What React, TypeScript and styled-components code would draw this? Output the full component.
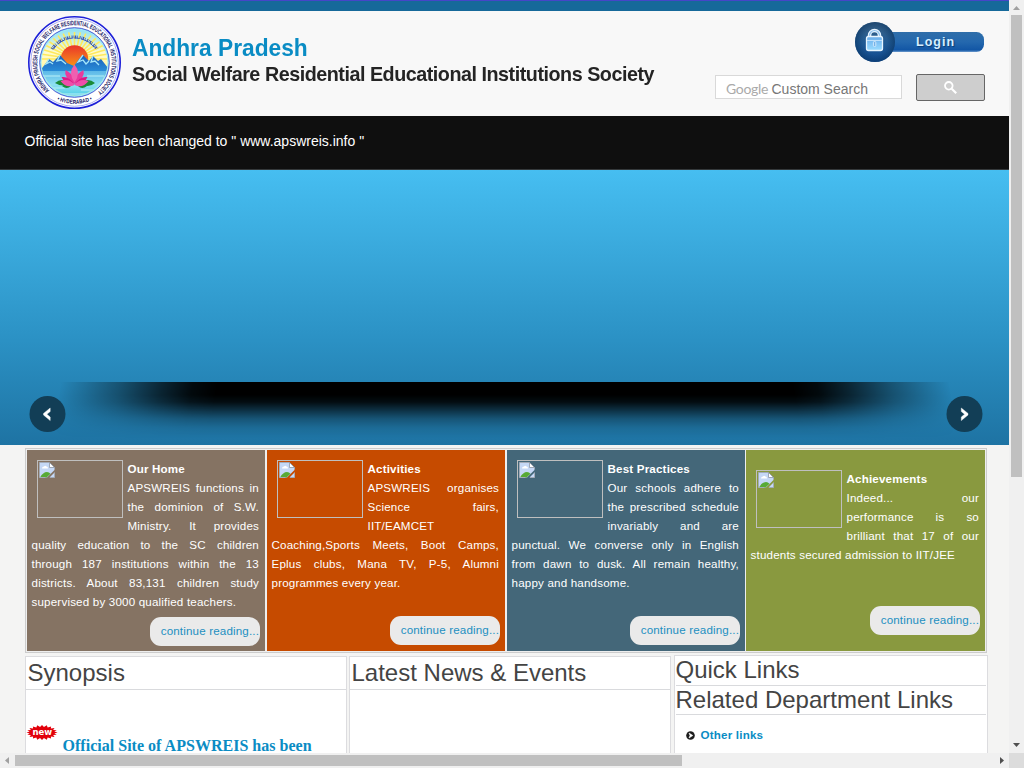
import React from "react";
import styled, { createGlobalStyle } from "styled-components";

const Global = createGlobalStyle`
  * { box-sizing: border-box; }
  body { margin: 0; overflow: hidden; background: #f4f4f3; font-family: "Liberation Sans", Arial, sans-serif; }
  h1, h2, h3, p { margin: 0; }
`;

const Window = styled.div`
  display: grid;
  grid-template-columns: 1009px 15px;
  grid-template-rows: 753px 15px;
  width: 1024px;
  height: 768px;
  overflow: hidden;
`;

const Viewport = styled.div`
  overflow: hidden;
  background: #f4f4f3;
`;

const Header = styled.header`
  height: 116px;
  border-top: 1px solid #4646c8;
  background: linear-gradient(#16699a 10px, #f8f8f8 10px);
  display: flex;
  justify-content: space-between;
  padding: 14px 24px 0 27px;
`;

const Brand = styled.div`
  display: flex;
  gap: 10px;
`;

const Titles = styled.div`
  width: 540px;
  padding-top: 19px;
`;

const StateName = styled.h1`
  width: max-content;
  font-size: 24px;
  line-height: 27px;
  transform: scaleX(0.948);
  transform-origin: 0 0;
  color: #0a8cc4;
`;

const Society = styled.h2`
  width: max-content;
  font-size: 21px;
  line-height: 26px;
  letter-spacing: -0.5px;
  transform: scaleX(0.939);
  transform-origin: 0 0;
  color: #242424;
  white-space: nowrap;
`;

const Tools = styled.div`
  width: 270px;
  padding-top: 7px;
`;

const LoginRow = styled.div`
  display: flex;
  justify-content: flex-end;
  height: 52px;
`;

const SearchRow = styled.div`
  display: flex;
  justify-content: space-between;
`;

const SearchBox = styled.div`
  width: 187px;
  height: 24px;
  margin-top: 1px;
  border: 1px solid #d9d9d9;
  background: #fff;
  display: flex;
  align-items: center;
  padding: 3px 0 0 10px;
  font-size: 14px;
  color: #777;
  white-space: nowrap;
`;

const Google = styled.span`
  width: 45.5px;
  font-family: Lato, sans-serif;
  font-size: 14px;
  letter-spacing: -0.3px;
  color: #aaa;
`;

const SearchButton = styled.button`
  width: 69px;
  height: 27px;
  padding: 0;
  border: 1px solid #666;
  border-radius: 2px;
  background: #cecece;
  display: flex;
  align-items: center;
  justify-content: center;
`;

const Notice = styled.div`
  height: 54px;
  background: #0f0f0f;
  border-bottom: 1px solid #35393b;
  color: #fff;
  font-size: 14px;
  line-height: 50px;
  padding-left: 24.5px;
`;

const Hero = styled.section`
  height: 275px;
  padding: 212px 26px 0 29px;
  background: linear-gradient(#46bef1 0%, #2b91c4 62%, #1e73a3 100%);
`;

const SliderFoot = styled.div`
  height: 63px;
  display: grid;
  grid-template-columns: 37px 1fr 37px;
  svg { grid-row: 1; grid-column: 1; margin-top: 14px; z-index: 1; }
  svg:last-child { grid-column: 3; }
  &::before {
    content: "";
    grid-area: 1 / 1 / 2 / 4;
    margin: 0 20px 0 18px;
    background: linear-gradient(#000 13px, rgba(0,0,0,.9) 20px, rgba(0,0,0,.62) 28px, rgba(0,0,0,.3) 37px, rgba(0,0,0,.1) 46px, transparent 56px);
    mask-image:
      linear-gradient(100deg, transparent 14px, rgba(0,0,0,.15) 38px, rgba(0,0,0,.38) 72px, rgba(0,0,0,.72) 114px, rgba(0,0,0,.93) 144px, #000 168px),
      linear-gradient(260deg, transparent 14px, rgba(0,0,0,.15) 38px, rgba(0,0,0,.38) 72px, rgba(0,0,0,.72) 114px, rgba(0,0,0,.93) 144px, #000 168px);
    mask-composite: intersect;
  }
`;

const Content = styled.main`
  margin-left: 25px;
  width: 963px;
  padding-top: 3px;
`;

const Cards = styled.section`
  width: 962px;
  height: 205px;
  border: 1px solid #ccc;
  background: #eee;
  padding: 1px;
  display: grid;
  grid-template-columns: 240px 240px 239px 239px;
`;

const Card = styled.article<{ $color: string; $gap: number; $top: number; $bottom: number }>`
  background: ${(p) => p.$color};
  margin-right: ${(p) => p.$gap}px;
  padding: ${(p) => p.$top}px 5px ${(p) => p.$bottom}px 4.5px;
  height: 201px;
  display: flex;
  flex-direction: column;
`;

const CardText = styled.div`
  flex: 1;
  margin-right: 1px;
  color: #fff;
  font-size: 11.6px;
  letter-spacing: 0.18px;
  line-height: 19px;
  text-align: justify;
`;

const Picture = styled.div`
  float: left;
  width: 86px;
  height: 58px;
  border: 1px solid #bfbfbf;
  margin: 1px 4.5px 12px 5.5px;
`;

const More = styled.a`
  align-self: flex-end;
  width: 110px;
  height: 29px;
  border-radius: 11px;
  background: #eaeaea;
  color: #1c8fc1;
  font-size: 11.6px;
  letter-spacing: 0.16px;
  line-height: 28px;
  padding-left: 10.7px;
  white-space: nowrap;
`;

const Panels = styled.section`
  display: grid;
  grid-template-columns: 324px 325px 314px;
  align-items: start;
  padding-top: 2px;
`;

const Panel = styled.div<{ $quick?: boolean }>`
  width: ${(p) => (p.$quick ? 314 : 322)}px;
  height: 140px;
  margin-top: ${(p) => (p.$quick ? 0 : 1)}px;
  padding: 0 ${(p) => (p.$quick ? 1 : 0)}px;
  border: 1px solid #dcdcdf;
  background: #fff;
`;

const Heading = styled.h3<{ $height: number; $indent: number }>`
  height: ${(p) => p.$height}px;
  text-indent: ${(p) => p.$indent}px;
  border-bottom: 1px solid #d9dadd;
  font-weight: 400;
  font-size: 24px;
  line-height: ${(p) => p.$height - 2}px;
  color: #444;
`;

const NewsItem = styled.div`
  display: flex;
  align-items: flex-start;
  gap: 4.5px;
  padding: 35px 0 0 1px;
`;

const NewsLink = styled.a`
  margin-top: 12px;
  font: bold 16px/18px "Liberation Serif", "Times New Roman", serif;
  letter-spacing: 0.02px;
  color: #0a8cc4;
  white-space: nowrap;
`;

const LinkRow = styled.a`
  display: flex;
  align-items: center;
  gap: 5.5px;
  padding: 13px 0 0 10px;
  font-size: 11.6px;
  letter-spacing: 0.2px;
  font-weight: 700;
  line-height: 14px;
  color: #0a8cc4;
`;

const VerticalBar = styled.div`
  background: #f0f0f0;
  display: flex;
  flex-direction: column;
  align-items: center;
  svg:last-child { margin-top: auto; }
`;

const HorizontalBar = styled.div`
  background: #f0f0f0;
  display: flex;
  align-items: center;
  svg:last-child { margin-left: auto; }
`;

const Thumb = styled.div<{ $w: number; $h: number }>`
  width: ${(p) => p.$w}px;
  height: ${(p) => p.$h}px;
  background: #c0c0c0;
`;

const Corner = styled.div`
  background: #dcdcdc;
`;

const Triangle = ({ d, fill }: { d: string; fill: string }) => (
  <svg width="15" height="15" viewBox="0 0 15 15"><path d={d} fill={fill} /></svg>
);

const Emblem = () => (
  <svg width="95" height="95" viewBox="0 0 95 95">
    <defs>
      <linearGradient id="sky" x1="0" y1="0" x2="0" y2="1">
        <stop offset="0" stopColor="#8be0f6" /><stop offset=".35" stopColor="#fffbd0" /><stop offset=".6" stopColor="#fff6a0" />
      </linearGradient>
      <linearGradient id="lake" x1="0" y1="0" x2="0" y2="1">
        <stop offset="0" stopColor="#5cb8e8" /><stop offset=".5" stopColor="#8ee0f2" /><stop offset="1" stopColor="#42cbe4" />
      </linearGradient>
      <linearGradient id="sun" x1="0" y1="0" x2="0" y2="1">
        <stop offset="0" stopColor="#e8362a" /><stop offset="1" stopColor="#ffae13" />
      </linearGradient>
      <linearGradient id="hill" x1="0" y1="0" x2="0" y2="1">
        <stop offset="0" stopColor="#1c5fb8" /><stop offset="1" stopColor="#2b97df" />
      </linearGradient>
      <clipPath id="inner"><circle cx="47.5" cy="47.5" r="33" /></clipPath>
      <path id="ringTop" d="M26 78 A37.3 37.3 0 1 1 69 78" />
      <path id="ringBottom" d="M24 81.6 A41.5 41.5 0 0 0 71 81.6" />
    </defs>
    <circle cx="47.5" cy="47.5" r="45.7" fill="#fff" stroke="#1d20d8" strokeWidth="1.6" />
    <circle cx="47.5" cy="47.5" r="43.8" fill="none" stroke="#8a8ce8" strokeWidth=".7" />
    <circle cx="47.5" cy="47.5" r="34.8" fill="#9ce8f7" stroke="#2433c8" strokeWidth=".8" />
    <g clipPath="url(#inner)">
      <rect x="13" y="13" width="70" height="70" fill="url(#sky)" />
      <g stroke="#ffe95c" strokeWidth="1.6">
        {Array.from({ length: 19 }, (_, i) => {
          const a = (Math.PI * i) / 18;
          return <line key={i} x1="47.5" y1="44" x2={47.5 + 33 * Math.cos(a)} y2={44 - 27 * Math.sin(a)} />;
        })}
      </g>
      <circle cx="47.5" cy="44" r="13.7" fill="url(#sun)" />
      <path d="M12 57 L22 44 26 47 33 40 40 48 47 51 52 44 56 40 62 46 66 41 71 46 74 44 84 57V60H12z" fill="url(#hill)" />
      <path d="M22 44 19 49 23 47 26 49M33 40 30 46 34 45 39 49M56 40 51 47 56 45 59 49 62 46M66 41 64 47 68 46 72 50" fill="none" stroke="#a3e6fa" strokeWidth="1.3" />
      <rect x="12" y="56" width="72" height="27" fill="url(#lake)" />
      <path d="M15 61h18M60 61h17M18 73h20M54 75h17M32 79h27" stroke="#b9f0f7" strokeWidth="1" />
    </g>
    <g fill="none" stroke="#3a58b8">
      <path d="M25 34 A27 27 0 0 1 70 34" strokeWidth="3" strokeDasharray="1 .9 .7 .6 1.4 1 .6 1.7" />
      <path d="M26.5 34 A25.5 25.5 0 0 1 68.5 34" strokeWidth="1" strokeDasharray="5 1.5 8 2 6 2" />
    </g>
    <path d="M28 68q7-6 14 0-5 5-14 0M53 68q8-6 15 0-7 6-15 0M35 71q7-3 9 0-4 4-9 0M51 71q5-3 9 0-5 4-9 0" fill="#1a8a36" />
    <path d="M47.5 69q-11-6-9-14 6 3 9 9 3-6 9-9 2 8-9 14z" fill="#e83a9c" />
    <path d="M47.5 49.5q7 8 0 18-7-10 0-18z" fill="#f05fb0" />
    <path d="M47.5 70q-9 1-13-8 8-1 13 8 5-9 13-8-4 9-13 8z" fill="#dc1985" />
    <path d="M47.5 70q-8 4-14-4 9-3 14 4 5-7 14-4-6 8-14 4z" fill="#ef4eaa" />
    <g fill="#15155f" fontFamily="Liberation Sans, Arial, sans-serif" fontWeight="700">
      <text fontSize="6.6">
        <textPath href="#ringTop" startOffset="4.5" textLength="182" lengthAdjust="spacingAndGlyphs">ANDHRA PRADESH SOCIAL WELFARE RESIDENTIAL EDUCATIONAL INSTITUTIONS SOCIETY</textPath>
      </text>
      <text fontSize="5.8">
        <textPath href="#ringBottom" startOffset="7" textLength="36" lengthAdjust="spacingAndGlyphs">• HYDERABAD •</textPath>
      </text>
    </g>
  </svg>
);

const LoginBadge = () => (
  <svg width="130" height="41" viewBox="0 0 130 41">
    <defs>
      <linearGradient id="pill" x1="0" y1="0" x2="0" y2="1">
        <stop offset="0" stopColor="#2f6ea9" /><stop offset=".5" stopColor="#2468ae" /><stop offset=".9" stopColor="#1256a5" /><stop offset="1" stopColor="#6e9cce" />
      </linearGradient>
      <linearGradient id="disc" x1="0" y1="0" x2="0" y2="1">
        <stop offset="0" stopColor="#3d6384" /><stop offset=".5" stopColor="#215a92" /><stop offset="1" stopColor="#114c94" />
      </linearGradient>
      <radialGradient id="edge">
        <stop offset=".6" stopColor="#0a3766" stopOpacity="0" /><stop offset="1" stopColor="#0a3766" stopOpacity=".65" />
      </radialGradient>
      <linearGradient id="lock" x1="0" y1="0" x2="0" y2="1">
        <stop offset="0" stopColor="#69acea" /><stop offset="1" stopColor="#9bdcff" />
      </linearGradient>
    </defs>
    <rect x="24" y="10" width="105" height="20" rx="7.5" fill="url(#pill)" />
    <circle cx="20" cy="20" r="20" fill="url(#disc)" />
    <circle cx="20" cy="20" r="20" fill="url(#edge)" />
    <path d="M14.5 15v-1.500a5 5 0 0 1 10 0V15" fill="none" stroke="#e7f4ff" strokeWidth="3.6" />
    <path d="M14.5 15v-1.500a5 5 0 0 1 10 0V15" fill="none" stroke="#8dc0ee" strokeWidth="1.2" />
    <rect x="11.5" y="14.5" width="16" height="14" rx="2" fill="url(#lock)" stroke="#e9f6ff" strokeWidth="1.3" />
    <path d="M12 18.5h15" stroke="#bfe0fa" />
    <rect x="18.4" y="19.5" width="2.4" height="5" rx="1" fill="#76b2e8" stroke="#e7f5ff" strokeWidth=".8" />
    <text
      x="61" y="24" fontFamily="Liberation Sans, Arial, sans-serif" fontSize="12.5" fontWeight="700" letterSpacing="1"
      fill="#d6eeff" style={{ textShadow: "1px 1px 1px #0b3d75" }}
    >Login</text>
  </svg>
);

const Arrow = ({ next = false }: { next?: boolean }) => (
  <svg width="37" height="37" viewBox="0 0 37 37">
    <circle cx="18.5" cy="18" r="18" fill="#123e56" />
    <path
      d={next ? "M15.3 12 22 17.4V19L15.3 24.6V21L18.6 18.2 15.3 15.6z" : "M21.200 12 14.500 17.4V19L21.200 24.6V21L17.900 18.2 21.200 15.6z"}
      fill="#fff" stroke="#fff" strokeWidth=".4"
    />
  </svg>
);

const BrokenImage = () => (
  <svg width="18" height="18" viewBox="-1 -1 18 18" display="block">
    <path d="M.5.5h10l5 5V8L8 15.5H.5z" fill="#c5d8f6" />
    <path d="M3 6.5q0-2 2-2 1-1.500 2.500 0 1.500 0 1.500 2z" fill="#fff" />
    <path d="M1 15.5q3-5.500 7-5.500 2 0 3.500 1.700L7.500 15.500z" fill="#57aa35" />
    <path d="M15.5 10.5v5H10.500z" fill="#c5d8f6" />
    <path d="M.5 15.5V.5h10l5 5V7M.5 15.5h6M15.5 10.5v5H11" fill="none" stroke="#a3abb8" />
    <path d="M10.5.5v5h5z" fill="#fff" stroke="#8d96a5" strokeWidth=".8" />
  </svg>
);

const NewBurst = () => {
  const points = Array.from({ length: 40 }, (_, i) => {
    const a = (Math.PI * i) / 20;
    const outer = i % 2 === 0;
    return `${15 + (outer ? 15.5 : 12.5) * Math.cos(a)},${7.5 + (outer ? 7.5 : 5.6) * Math.sin(a)}`;
  }).join(" ");
  return (
    <svg width="31" height="15" viewBox="0 0 31 15" overflow="visible">
      <polygon points={points} fill="#e2000b" />
      <text x="5.5" y="10" fontFamily="DejaVu Sans, sans-serif" fontSize="8.5" fontWeight="700" fill="#fff" textLength="19.5">new</text>
    </svg>
  );
};

const CARDS = [
  { title: "Our Home", color: "#857363", gap: 2, top: 9, bottom: 5, text: "APSWREIS functions in the dominion of S.W. Ministry. It provides quality education to the SC children through 187 institutions within the 13 districts. About 83,131 children study supervised by 3000 qualified teachers." },
  { title: "Activities", color: "#c64b00", gap: 2, top: 9, bottom: 6, text: "APSWREIS organises Science fairs, IIT/EAMCET Coaching,Sports Meets, Boot Camps, Eplus clubs, Mana TV, P-5, Alumni programmes every year." },
  { title: "Best Practices", color: "#446779", gap: 1, top: 9, bottom: 6, text: "Our schools adhere to the prescribed schedule invariably and are punctual. We converse only in English from dawn to dusk. All remain healthy, happy and handsome." },
  { title: "Achievements", color: "#89993f", gap: 0, top: 19, bottom: 16, text: "Indeed... our performance is so brilliant that 17 of our students secured admission to IIT/JEE" },
];

export default function App() {
  return (
    <Window>
      <Global />
      <Viewport>
        <Header>
          <Brand>
            <Emblem />
            <Titles>
              <StateName>Andhra Pradesh</StateName>
              <Society>Social Welfare Residential Educational Institutions Society</Society>
            </Titles>
          </Brand>
          <Tools>
            <LoginRow><LoginBadge /></LoginRow>
            <SearchRow>
              <SearchBox><Google>Google</Google>Custom Search</SearchBox>
              <SearchButton aria-label="Search">
                <svg width="13" height="13" viewBox="0 0 13 13" fill="none" stroke="#fff">
                  <circle cx="4.8" cy="4.8" r="3.8" strokeWidth="1.8" />
                  <path d="M7.7 7.7 12.2 12.2" strokeWidth="2.2" />
                </svg>
              </SearchButton>
            </SearchRow>
          </Tools>
        </Header>
        <Notice>Official site has been changed to " www.apswreis.info "</Notice>
        <Hero>
          <SliderFoot><Arrow /><Arrow next /></SliderFoot>
        </Hero>
        <Content>
          <Cards>
            {CARDS.map((c) => (
              <Card key={c.title} $color={c.color} $gap={c.gap} $top={c.top} $bottom={c.bottom}>
                <CardText>
                  <Picture><BrokenImage /></Picture>
                  <b>{c.title}</b><br />{c.text}
                </CardText>
                <More>continue reading...</More>
              </Card>
            ))}
          </Cards>
          <Panels>
            <Panel>
              <Heading $height={33} $indent={1.5}>Synopsis</Heading>
              <NewsItem><NewBurst /><NewsLink>Official Site of APSWREIS has been</NewsLink></NewsItem>
            </Panel>
            <Panel><Heading $height={33} $indent={1.5}>Latest News &amp; Events</Heading></Panel>
            <Panel $quick>
              <Heading $height={30} $indent={-0.5}>Quick Links</Heading>
              <Heading $height={29} $indent={-0.5}>Related Department Links</Heading>
              <LinkRow>
                <svg width="9" height="9" viewBox="0 0 9 9">
                  <circle cx="4.5" cy="4.5" r="4.3" fill="#1d1d1d" />
                  <path d="M3 2 6.8 4.5 3 7 4 4.5z" fill="#fff" stroke="#fff" strokeWidth=".6" />
                </svg>
                Other links
              </LinkRow>
            </Panel>
          </Panels>
        </Content>
      </Viewport>
      <VerticalBar>
        <Triangle d="M4 10h7L7.5 6z" fill="#a0a0a0" />
        <Thumb $w={11} $h={462} />
        <Triangle d="M4 5h7L7.5 9z" fill="#505050" />
      </VerticalBar>
      <HorizontalBar>
        <Triangle d="M9 4v7L5 7.5z" fill="#a0a0a0" />
        <Thumb $w={667} $h={11} />
        <Triangle d="M6 4v7L10 7.5z" fill="#505050" />
      </HorizontalBar>
      <Corner />
    </Window>
  );
}
